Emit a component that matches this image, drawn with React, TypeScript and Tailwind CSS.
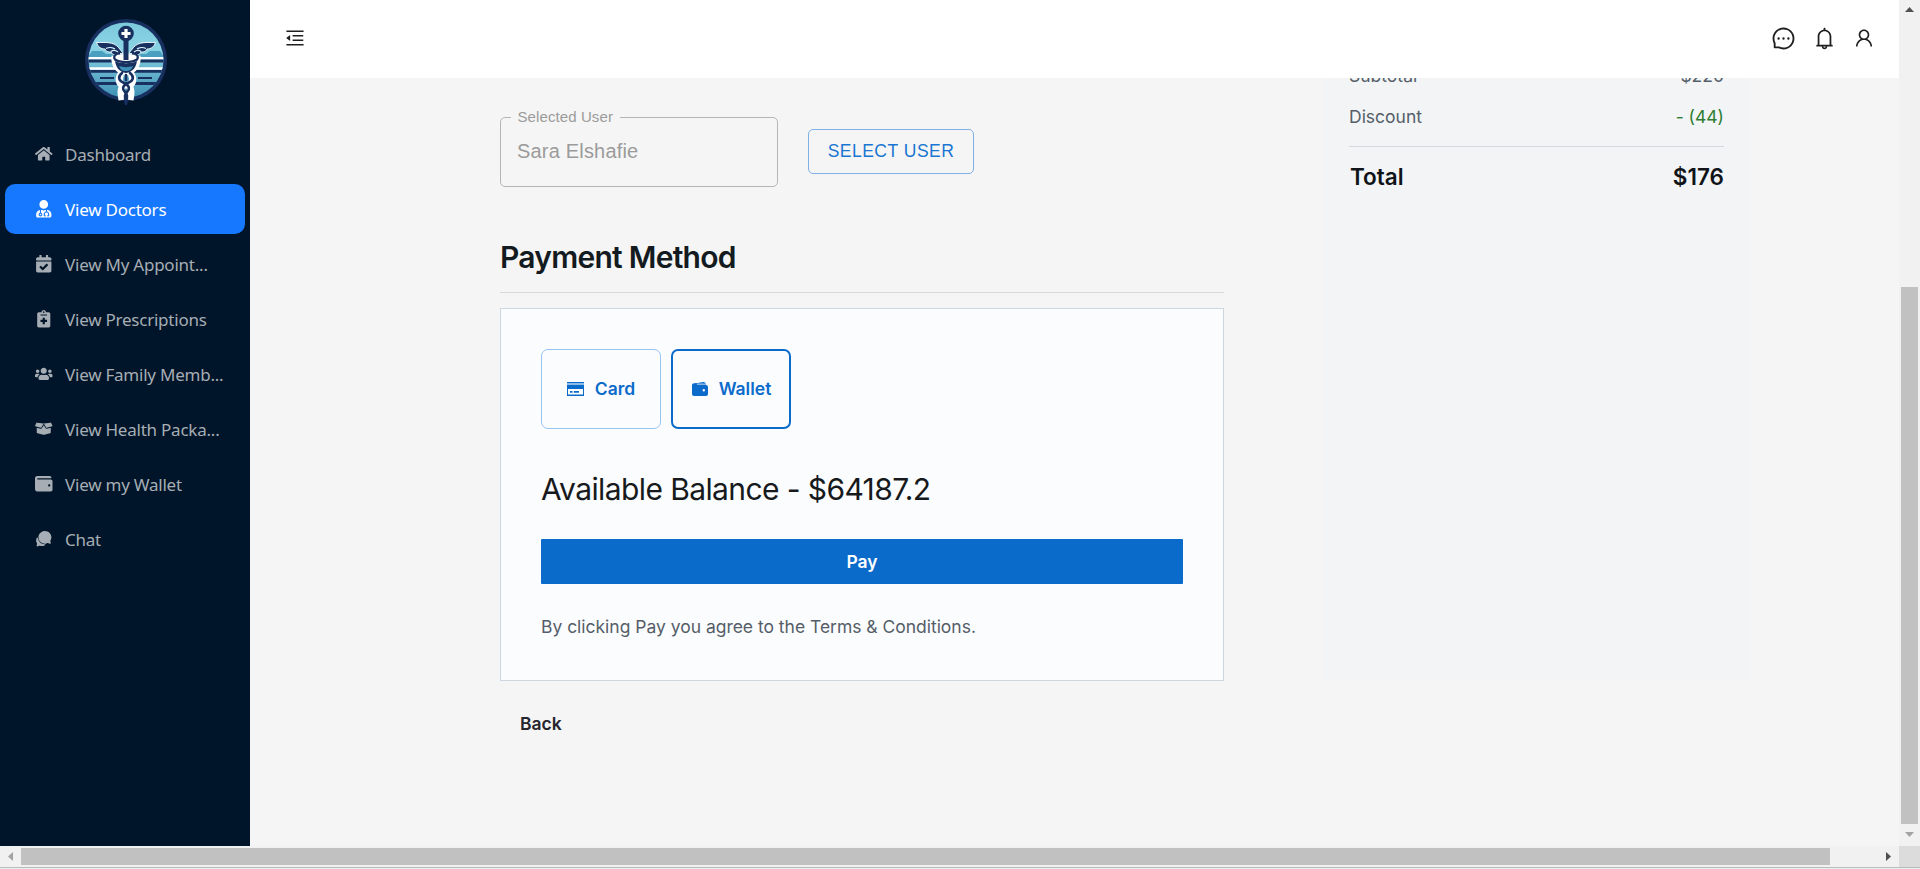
import type { ReactNode } from "react";
import {
  FaHome,
  FaUserMd,
  FaCalendarCheck,
  FaNotesMedical,
  FaUsers,
  FaBoxOpen,
  FaWallet,
} from "react-icons/fa";
import { IoChatbubbles } from "react-icons/io5";
import { AiOutlineMenuFold, AiOutlineMessage, AiOutlineBell, AiOutlineUser } from "react-icons/ai";

const navItems: { label: string; icon: ReactNode; active?: boolean }[] = [
  { label: "Dashboard", icon: <FaHome /> },
  { label: "View Doctors", icon: <FaUserMd />, active: true },
  { label: "View My Appoint...", icon: <FaCalendarCheck /> },
  { label: "View Prescriptions", icon: <FaNotesMedical /> },
  { label: "View Family Memb...", icon: <FaUsers /> },
  { label: "View Health Packa...", icon: <FaBoxOpen /> },
  { label: "View my Wallet", icon: <FaWallet /> },
  { label: "Chat", icon: <IoChatbubbles /> },
];

function Logo() {
  return (
    <svg viewBox="0 0 84 88" className="h-[88px] w-[84px]" fill="none">
      <defs>
        <linearGradient id="disc" x1="0" y1="0" x2="0" y2="1">
          <stop offset="0" stopColor="#7cc9dc" />
          <stop offset="0.35" stopColor="#8ad3e4" />
          <stop offset="1" stopColor="#3f90b5" />
        </linearGradient>
        <clipPath id="discClip">
          <circle cx="42" cy="42" r="37.500" />
        </clipPath>
      </defs>
      <circle cx="42" cy="42" r="41" fill="#17305f" />
      <circle cx="42" cy="42" r="37.500" fill="url(#disc)" />
      <g clipPath="url(#discClip)">
        <path d="M8 33h10l4 3h8v3H4zM76 33H66l-4 3h-8v3h26z" fill="#4a9fc0" />
        <path d="M2 40.300h80" stroke="#fff" strokeWidth="2.600" />
        <path d="M2 43h80" stroke="#17305f" strokeWidth="2.800" />
        <path d="M2 50.500h80" stroke="#fff" strokeWidth="2.600" />
        <path d="M2 53.400h80" stroke="#17305f" strokeWidth="2.800" />
        <path d="M16 60h14M54 60h14" stroke="#17305f" strokeWidth="2" />
        <path d="M2 65.500h80" stroke="#17305f" strokeWidth="3" />
      </g>
      <path
        d="M31 38c-1 8 3 15 11 16 8-1 12-8 11-16M37 56c-3 5-2 9 2 12-3 4-2 8-1 14M47 56c3 5 2 9-2 12 3 4 2 8 1 14"
        stroke="#fff"
        strokeWidth="7"
        strokeLinejoin="round"
      />
      <path d="M42 36c-6 0-12 1-12 4 0 8 4 14 12 15 8-1 12-7 12-15 0-3-6-4-12-4z" fill="#fff" />
      <path
        d="M12.500 24.500c9 0 17-1 22 5l5 6c-4-1-5 2-8 1.500-3-.5-4-1.500-4.500-3-4 0-5-1-6-3-4 0-7-2-8.500-6.500zM71.500 24.500c-9 0-17-1-22 5l-5 6c4-1 5 2 8 1.500 3-.5 4-1.500 4.500-3 4 0 5-1 6-3 4 0 7-2 8.500-6.500z"
        fill="#17305f"
        stroke="#e8f6fa"
        strokeWidth="1"
      />
      <path
        d="M22 30.500c3-1.500 7-1 9 .5M27 33.500c2-1.500 5-1 7 .5M62 30.500c-3-1.500-7-1-9 .5M57 33.500c-2-1.500-5-1-7 .5"
        stroke="#d9f1f8"
        strokeWidth="1.200"
      />
      <circle cx="42" cy="15.500" r="7.800" fill="#17305f" />
      <path d="M42 11v9M37.500 15.500h9" stroke="#fff" strokeWidth="3.200" />
      <path d="M42 22v20" stroke="#17305f" strokeWidth="5" />
      <path d="M36 35.500c-5 0-7 3-5 6 3 2 7 2.500 11 2.500s8-.5 11-2.500c2-3 0-6-5-6" stroke="#17305f" strokeWidth="2.200" />
      <path d="M31 43c1 6 4 11 11 12 7-1 10-6 11-12-5 3-17 3-22 0z" fill="#17305f" />
      <path d="M35 48c4 1.500 10 1.500 14 0-1 3-3 5-7 5s-6-2-7-5z" fill="#3f90b5" />
      <path
        d="M38 55c-5 4-3 8 2 10 6 3 6 6 3 9-3 3-2 5-1 12M46 55c5 4 3 8-2 10-6 3-6 6-3 9 3 3 2 5 1 12M42 57v5"
        stroke="#17305f"
        strokeWidth="2.600"
        strokeLinecap="round"
      />
    </svg>
  );
}

function CardIcon() {
  return (
    <svg viewBox="0 0 17 14" className="h-3.5 w-[17px]">
      <rect x="0.500" y="0.500" width="16" height="13" fill="#fff" stroke="#0b6bcb" />
      <path d="M0 0h17v1H0zM0 3h17v4H0zM0 12.500h17V14H0zM3 9h2.500v1.800H3zM6.800 9H12v1.800H6.800z" fill="#0b6bcb" />
      <path d="M0 1h17v2H0z" fill="#8dbbe7" />
    </svg>
  );
}

function PurseIcon() {
  return (
    <svg viewBox="0 0 16 14" className="h-3.5 w-4">
      <path d="M3 1.500 11 .1c1.300-.2 2.500.5 2.700 1.900H3z" fill="#0b6bcb" />
      <path d="M5 1.400h9V3.500H5z" fill="#85b5e5" />
      <path
        fillRule="evenodd"
        d="M2 1.200h3V3h9a2 2 0 0 1 2 2v7a2 2 0 0 1-2 2H2a2 2 0 0 1-2-2V3.200c0-1.200.8-2 2-2zM11.800 7a1.200 1.200 0 1 0 0 2.400 1.200 1.200 0 0 0 0-2.400z"
        fill="#0b6bcb"
      />
    </svg>
  );
}

function Sidebar() {
  return (
    <aside className="flex w-[250px] shrink-0 flex-col bg-[#001529]">
      <div className="flex h-[129px] justify-center pt-[18px] pl-0.5">
        <Logo />
      </div>
      <nav className="flex flex-col gap-[5px] px-[5px] font-['Noto_Sans',sans-serif]">
        {navItems.map((item) => (
          <div
            key={item.label}
            className={
              item.active
                ? "flex h-[50px] items-center gap-3 rounded-[10px] bg-[#1677ff] pl-[30px] text-[17px] tracking-[-0.23px] text-white"
                : "flex h-[50px] items-center gap-3 rounded-[10px] pl-[30px] text-[17px] tracking-[-0.23px] text-[#a6adb4]"
            }
          >
            <span className="flex w-[18px] justify-center text-[17.5px]">{item.icon}</span>
            <span className="pt-px whitespace-nowrap">{item.label}</span>
          </div>
        ))}
      </nav>
    </aside>
  );
}

function Header() {
  return (
    <header className="flex h-[78px] shrink-0 items-center justify-between bg-white pr-6 pb-0.5 pl-[34px] text-[#1f1f1f]">
      <AiOutlineMenuFold className="size-[22px]" />
      <div className="flex items-center gap-4 text-[25px]">
        <AiOutlineMessage />
        <AiOutlineBell />
        <AiOutlineUser className="size-[22px]" />
      </div>
    </header>
  );
}

function PaymentForm() {
  return (
    <section className="w-[724px] pt-[39px]">
      <div className="flex gap-[30px]">
        <fieldset className="-mt-[11px] h-[81px] w-[278px] rounded-[5px] border border-[#b5b5b5] px-[10px] font-['Liberation_Sans',sans-serif] text-[#9b9b9b]">
          <legend className="h-[22px] px-[6.5px] text-[15px] leading-[22px] tracking-[0.1px]">Selected User</legend>
          <div className="px-[6px] pt-3 text-[20px] leading-[23px] tracking-[0.19px]">Sara Elshafie</div>
        </fieldset>
        <button className="mt-3 h-[45px] w-[166px] rounded-[5px] border border-[#80b1e4] font-['Liberation_Sans',sans-serif] text-[17.5px] tracking-[0.5px] text-[#1976d2]">
          SELECT USER
        </button>
      </div>
      <h2 className="mt-[50px] h-[56px] border-b border-[#d7d9dc] text-[30px] leading-10 font-semibold tracking-[-0.75px] text-[#131b20]">
        Payment Method
      </h2>
      <div className="mt-[15px] h-[373px] border border-[#cdd7e1] bg-[#fbfcfe] p-10">
        <div className="flex gap-2.5 text-[17.5px] font-semibold text-[#0b6bcb]">
          <button className="flex h-20 w-[120px] items-center justify-center gap-[11px] rounded-[7px] border border-[#97c3f0]">
            <CardIcon />
            Card
          </button>
          <button className="flex h-20 w-[120px] items-center justify-center gap-[11px] rounded-[7px] border-2 border-[#0b6bcb] pl-px">
            <PurseIcon />
            Wallet
          </button>
        </div>
        <div className="mt-10 text-[30px] leading-10 tracking-[-0.6px] text-[#171a1c]">
          Available Balance - $64187.2
        </div>
        <button className="mt-[30px] h-[45px] w-full rounded-[1px] bg-[#0b6bcb] pt-0.5 text-[17.5px] font-semibold text-white">
          Pay
        </button>
        <p className="mt-[30px] text-[17.5px] leading-[26px] tracking-[-0.02px] text-[#555e68]">
          By clicking Pay you agree to the Terms &amp; Conditions.
        </p>
      </div>
      <button className="mt-[30px] ml-5 block text-[17.5px] leading-[26px] font-semibold text-[#25252d]">Back</button>
    </section>
  );
}

function OrderSummary() {
  return (
    <aside className="ml-[100px] h-[603px] w-[425px] overflow-hidden bg-[#f2f4f6] pr-[25px] pl-[25px]">
      <div className="-mt-[15px] flex justify-between text-[17.5px] leading-[26px] text-[#555e68]">
        <span>Subtotal</span>
        <span>$220</span>
      </div>
      <div className="mt-[15px] flex h-[43px] justify-between border-b border-[#d5d8dc] text-[17.5px] leading-[26px] text-[#555e68]">
        <span>Discount</span>
        <span className="text-[#2e7d32]">- (44)</span>
      </div>
      <div className="mt-[13px] flex justify-between text-[22.5px] leading-[34px] font-semibold text-[#101418]">
        <span className="pl-px">Total</span>
        <span>$176</span>
      </div>
    </aside>
  );
}

function VerticalScrollbar() {
  return (
    <div className="flex w-[21px] shrink-0 flex-col items-center bg-[#f1f1f1]">
      <svg viewBox="0 0 21 21" className="h-[21px] w-[21px]">
        <path d="M6 12h9l-4.500-5z" fill="#505050" />
      </svg>
      <div className="mt-[266px] h-[537px] w-[17px] bg-[#c1c1c1]" />
      <svg viewBox="0 0 21 21" className="h-[21px] w-[21px]">
        <path d="M6 8h9l-4.500 5z" fill="#a3a3a3" />
      </svg>
    </div>
  );
}

function HorizontalScrollbar() {
  return (
    <div className="flex h-[21px] shrink-0 items-center bg-[#f1f1f1]">
      <svg viewBox="0 0 21 21" className="h-[21px] w-[21px]">
        <path d="M13 6v9l-5-4.500z" fill="#a3a3a3" />
      </svg>
      <div className="h-[17px] w-[1809px] bg-[#c1c1c1]" />
      <svg viewBox="0 0 21 21" className="ml-12 h-[21px] w-[21px]">
        <path d="M8 6v9l5-4.500z" fill="#505050" />
      </svg>
      <div className="h-[21px] w-[21px] bg-[#dcdcdc]" />
    </div>
  );
}

export default function App() {
  return (
    <div className="flex h-[869px] w-[1920px] flex-col overflow-hidden bg-[#e9eef0] font-['Inter',sans-serif]">
      <div className="flex h-[846px] shrink-0">
        <Sidebar />
        <main className="flex min-w-0 flex-1 flex-col bg-[#f5f5f5]">
          <Header />
          <div className="flex flex-1 pl-[250px]">
            <PaymentForm />
            <OrderSummary />
          </div>
        </main>
        <VerticalScrollbar />
      </div>
      <HorizontalScrollbar />
      <div className="h-px shrink-0 bg-[#b9bdbf]" />
    </div>
  );
}
